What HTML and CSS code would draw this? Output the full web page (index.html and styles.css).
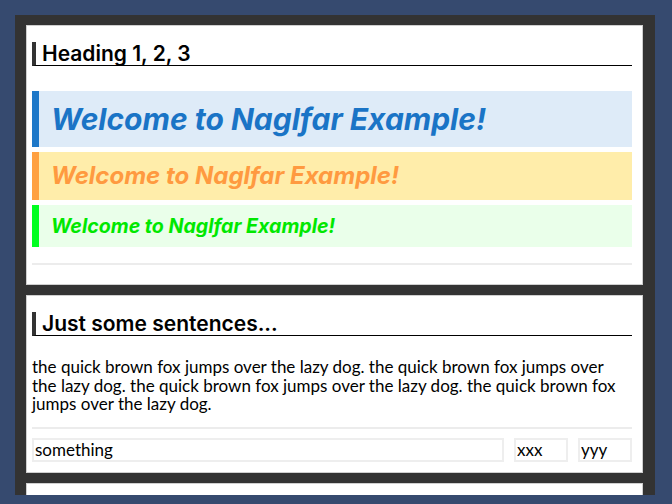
FILE: index.html
```html
<!DOCTYPE html>
<html>
<head>
<meta charset="utf-8">
<link rel="stylesheet" href="styles.css">
</head>
<body>
<div class="frame">
  <section class="card">
    <h2 class="heading">Heading 1, 2, 3</h2>
    <div class="welcome welcome-blue">Welcome to Naglfar Example!</div>
    <div class="welcome welcome-orange">Welcome to Naglfar Example!</div>
    <div class="welcome welcome-green">Welcome to Naglfar Example!</div>
    <hr class="rule rule-end">
  </section>
  <section class="card">
    <h2 class="heading">Just some sentences...</h2>
    <p class="text">the quick brown fox jumps over the lazy dog. the quick brown fox jumps over the lazy dog. the quick brown fox jumps over the lazy dog. the quick brown fox jumps over the lazy dog.</p>
    <hr class="rule">
    <div class="inputs">
      <input class="field field-wide" type="text" value="something">
      <input class="field field-small" type="text" value="xxx">
      <input class="field field-small" type="text" value="yyy">
    </div>
  </section>
  <section class="card card-tail"></section>
</div>
</body>
</html>
```
FILE: styles.css
```css
html, body {
  margin: 0;
  padding: 0;
}
body {
  background: #364a6f;
  width: 672px;
  height: 504px;
  overflow: hidden;
}
.frame {
  margin: 15px;
  width: 640px;
  height: 480px;
  box-sizing: border-box;
  background: #333333;
  padding: 10px 12px 0 11px;
  overflow: hidden;
}
.card {
  background: #ffffff;
  border: 1px solid #cfcfcf;
  padding: 5px 10px 5px 5px;
  margin-bottom: 10px;
}
.card-tail {
  height: 40px;
}
.heading {
  margin: 11px 0 0 0;
  font-family: Inter, "Noto Sans", sans-serif;
  font-weight: 600;
  font-size: 21px;
  line-height: 23px;
  color: #000;
  border-left: 4px solid #333;
  border-bottom: 1px solid #000;
  padding-left: 6px;
}
.welcome {
  font-family: Inter, "Noto Sans", sans-serif;
  font-weight: 700;
  font-style: italic;
  border-left: 7px solid;
  padding: 8px 0 8px 12px;
  margin-top: 5px;
}
.welcome-blue {
  margin-top: 25px;
  font-size: 30px;
  line-height: 40px;
  color: #1a74c6;
  border-color: #1e78c8;
  background: #deebf8;
}
.welcome-orange {
  font-size: 24px;
  line-height: 32px;
  color: #ff9a40;
  border-color: #ffa040;
  background: #ffedaa;
}
.welcome-green {
  font-size: 19.6px;
  line-height: 26px;
  color: #00e800;
  border-color: #00ff20;
  background: #eaffea;
}
.rule {
  border: 0;
  height: 2px;
  background: #ececec;
  margin: 0;
}
.rule-end {
  margin: 16px 0 14px 0;
}
.text {
  font-family: Lato, "Noto Sans", sans-serif;
  font-size: 17px;
  line-height: 18.5px;
  color: #000;
  margin: 22px 0 13px 0;
}
.inputs {
  display: flex;
  gap: 10px;
  margin: 9px 0 5px 0;
}
.field {
  font-family: Lato, "Noto Sans", sans-serif;
  font-size: 17px;
  color: #000;
  height: 24px;
  box-sizing: border-box;
  border: 2px solid #eeeeee;
  padding: 0 1px;
  margin: 0;
  outline: none;
  background: #fff;
}
.field-wide {
  flex: 1;
  min-width: 0;
}
.field-small {
  width: 54px;
}
```
